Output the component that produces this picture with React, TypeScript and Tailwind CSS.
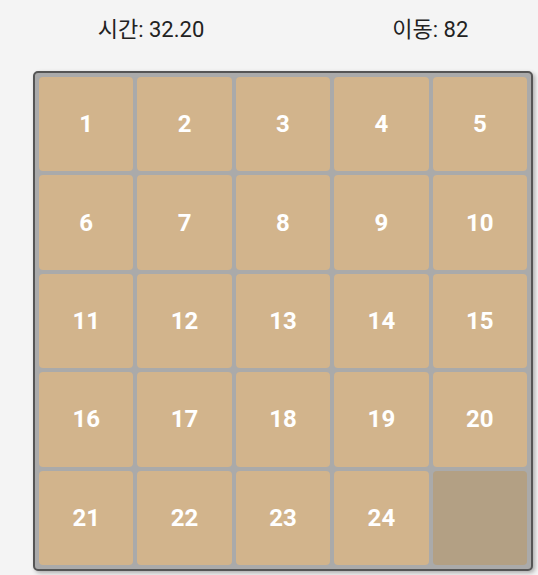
import { useState } from 'react';

const FONT = { fontFamily: 'Roboto, "Noto Sans CJK KR", sans-serif' };

const App = () => {
  const [tiles] = useState<(number | null)[]>([
    ...Array.from({ length: 24 }, (_, i) => i + 1),
    null,
  ]);
  const [time] = useState('32.20');
  const [moves] = useState(82);

  return (
    <div className="min-h-screen w-full bg-[#f4f4f4] pl-[33px]" style={FONT}>
      <div className="flex h-[58px] w-[500px] items-center justify-center gap-[188px] text-[22px] text-[#222]">
        <span>시간: {time}</span>
        <span>이동: {moves}</span>
      </div>

      <div className="mt-[13px] grid h-[500px] w-[500px] grid-cols-5 gap-1 rounded-[5px] border-2 border-[#555] bg-[#aaa] p-1 shadow-[2px_2px_4px_rgba(0,0,0,0.3)]">
        {tiles.map((n, i) =>
          n === null ? (
            <div key={i} className="rounded-[4px] bg-[#b3a084]" />
          ) : (
            <div
              key={i}
              className="flex items-center justify-center rounded-[4px] bg-[#d2b48c] text-[24px] font-bold text-white"
            >
              {n}
            </div>
          )
        )}
      </div>
    </div>
  );
};

export default App;
